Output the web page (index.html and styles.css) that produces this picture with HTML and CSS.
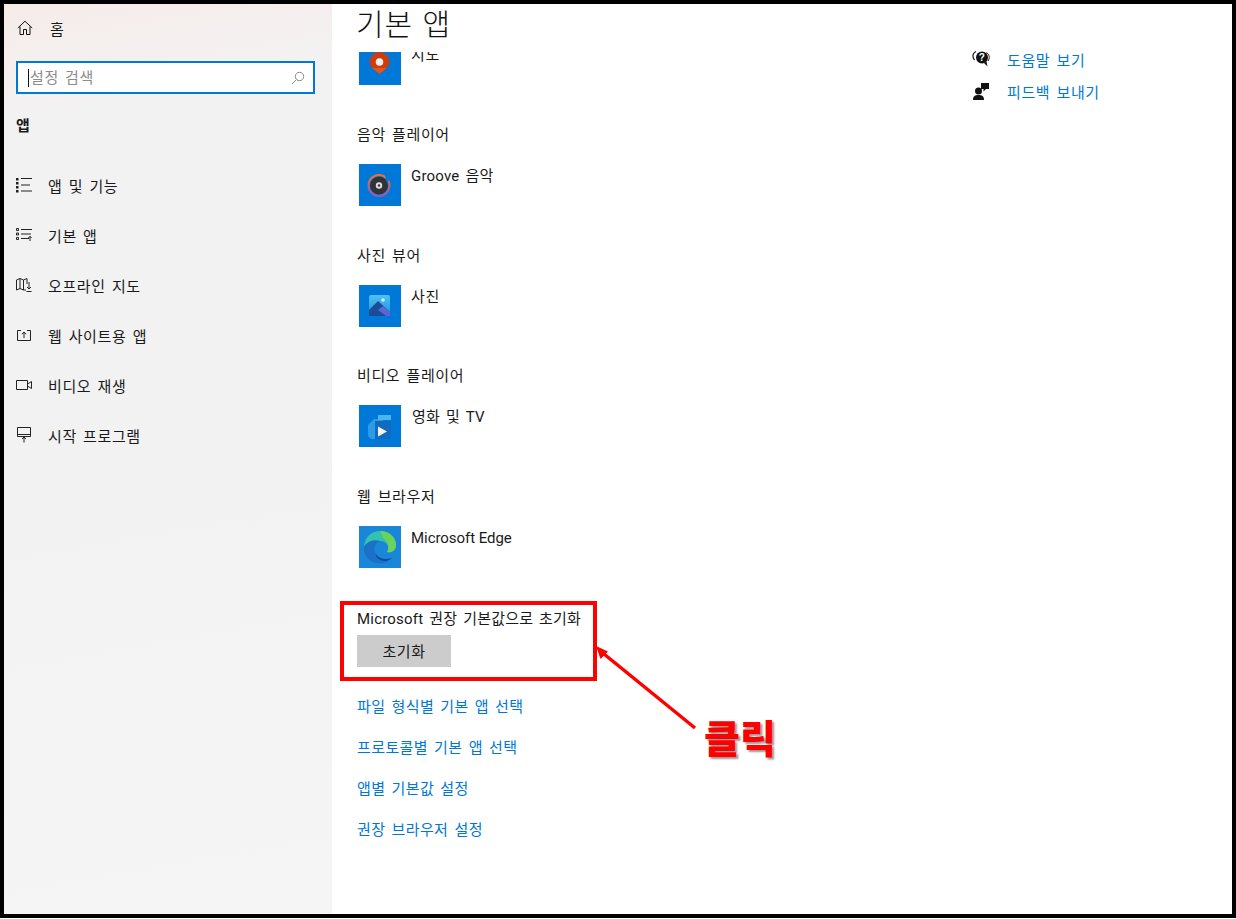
FILE: index.html
```html
<!DOCTYPE html>
<html lang="ko">
<head>
<meta charset="utf-8">
<title>기본 앱</title>
<link rel="stylesheet" href="styles.css">
</head>
<body>
<div class="frame">
  <aside class="sidebar">
    <div class="home">
      <svg class="ico" viewBox="0 0 16 16"><path d="M.8 8 8 1.2 15.2 8M3 6.5V14.5H6.5V9.5H9.5V14.5H13V6.5" fill="none" stroke="#111" stroke-width="1"/></svg>
      <span>홈</span>
    </div>
    <div class="search">
      <span class="caret"></span><span class="placeholder">설정 검색</span>
      <svg class="glass" viewBox="0 0 14 14"><circle cx="8.5" cy="5.5" r="4.2" fill="none" stroke="#8a8a8a"/><path d="M5.5 8.5 1 13" stroke="#8a8a8a" fill="none"/></svg>
    </div>
    <div class="group">앱</div>
    <nav class="nav">
      <div class="nav-item">
        <svg class="ico" viewBox="0 0 16 16"><path d="M0 1h2.500v2.500H0zM0 5h2.500v2.500H0zM0 9h2.500v2.500H0zM0 13h2.500v2.500H0z" fill="#222"/><path d="M5 1.500h11M5 8h9M5 14h11" stroke="#222" fill="none"/></svg>
        <span>앱 및 기능</span>
      </div>
      <div class="nav-item">
        <svg class="ico" viewBox="0 0 16 16"><path d="M0.5 1.500h2v2h-2zM0.5 6h2v2h-2zM0.5 10.500h2v2h-2z" fill="none" stroke="#222"/><path d="M5 2.500h11M5 7h10M5 11.500h8M14 14V9.500M12.300 11 14 9.300 15.700 11" stroke="#222" fill="none"/></svg>
        <span>기본 앱</span>
      </div>
      <div class="nav-item">
        <svg class="ico" viewBox="0 0 16 16"><path d="M.5 3 4 1.500 7.500 3 11 1.500V7M.5 3v10L4 11.500 7.500 13H10M4 1.500v10M7.500 3v10M13 5v7M11 10l2 2 2-2M10.500 14.500h5" stroke="#222" fill="none"/></svg>
        <span>오프라인 지도</span>
      </div>
      <div class="nav-item">
        <svg class="ico" viewBox="0 0 16 16"><path d="M5 3.500H1.500v10h13v-10H11M8 11V5M5.800 7.200 8 5l2.200 2.200" stroke="#222" fill="none"/></svg>
        <span>웹 사이트용 앱</span>
      </div>
      <div class="nav-item">
        <svg class="ico" viewBox="0 0 16 16"><path d="M.5 3.500h11v9H.5zM11.500 7l4-2.500v7l-4-2.500" stroke="#222" fill="none"/></svg>
        <span>비디오 재생</span>
      </div>
      <div class="nav-item">
        <svg class="ico" viewBox="0 0 16 16"><path d="M1.500.5h13v9h-13zM1 7.500h14M8 15.500V10M6 12l2-2 2 2" stroke="#222" fill="none"/></svg>
        <span>시작 프로그램</span>
      </div>
    </nav>
  </aside>

  <main class="main">
    <h1 class="title">기본 앱</h1>
    <div class="body">
      <div class="content">
        <section class="clipped">
          <div class="app">
            <div class="tile">
              <svg viewBox="0 0 42 42"><path d="M10.500 19a10 10 0 0 1 20 0c0 5-6 8-10 12-4-4-10-7-10-12Z" fill="#cf3c0c"/><path d="M13 25h15l-7.500 6Z" fill="#e2561a"/><circle cx="20.500" cy="19" r="3.800" fill="#eee"/></svg>
            </div>
            <span class="app-name">지도</span>
          </div>
        </section>
        <section class="cat">
          <div class="cat-label">음악 플레이어</div>
          <div class="app">
            <div class="tile">
              <svg viewBox="0 0 42 42"><defs><linearGradient id="ring" x1="0" y1="0" x2="0" y2="1"><stop offset="0" stop-color="#e8743a"/><stop offset="1" stop-color="#8a5ac8"/></linearGradient></defs><circle cx="20" cy="21.500" r="10.500" fill="none" stroke="url(#ring)" stroke-width="2"/><circle cx="20" cy="21.500" r="9" fill="#333336"/><circle cx="20" cy="21.500" r="3.200" fill="#ddd"/><circle cx="20" cy="21.500" r="1.200" fill="#333"/><path d="M26 11 32 13 28 19Z" fill="#0078d7"/></svg>
            </div>
            <span class="app-name mixed">Groove 음악</span>
          </div>
        </section>
        <section class="cat">
          <div class="cat-label">사진 뷰어</div>
          <div class="app">
            <div class="tile">
              <svg viewBox="0 0 42 42"><defs><linearGradient id="sky" x1="0" y1="0" x2="0" y2="1"><stop offset="0" stop-color="#4cc2f5"/><stop offset="1" stop-color="#1f8fe0"/></linearGradient></defs><rect x="10" y="10" width="21" height="21" rx="2" fill="url(#sky)"/><circle cx="24" cy="15" r="1.800" fill="#cfeefc"/><path d="M10 31V25L19 16 31 27V31Z" fill="#1d4c96"/><path d="M24 21 31 27V31H27L19 25Z" fill="#5a66d6"/></svg>
            </div>
            <span class="app-name">사진</span>
          </div>
        </section>
        <section class="cat">
          <div class="cat-label">비디오 플레이어</div>
          <div class="app">
            <div class="tile">
              <svg viewBox="0 0 42 42"><path d="M9 20 15 14H24V34H12L9 31Z" fill="#2c9be8"/><path d="M19 10H32V15H19Z" fill="#4cb4ee"/><rect x="16" y="16" width="16" height="18" fill="#1269bd"/><path d="M19 21.500 28 26.500 19 31.500Z" fill="#f2f6fa"/></svg>
            </div>
            <span class="app-name app-name-wide mixed">영화 및 TV</span>
          </div>
        </section>
        <section class="cat">
          <div class="cat-label">웹 브라우저</div>
          <div class="app">
            <div class="tile tile-edge">
              <svg viewBox="0 0 42 42"><path d="M5 21C6 10 13 5 21 5 31 5 37 12 37 19 37 25 32 27 28 26 31 22 29 15 21 15 13 15 8 17 5 21Z" fill="#35c1b0"/><path d="M21 5C31 5 37 12 37 19 37 25 32 27 28 26 31 22 29 15 24 12 23 9 22 7 21 5Z" fill="#6bd35c"/><path d="M5 21C8 15 15 13 21 15 15 17 14 24 17 29 20 34 27 35 33 32 28 37 22 38 17 37 9 35 4 28 5 21Z" fill="#1b70c8"/><path d="M16 24C16 30 22 35 33 32 27 37 20 35 17 30Z" fill="#0c4a97"/></svg>
            </div>
            <span class="app-name latin">Microsoft Edge</span>
          </div>
        </section>
        <section class="reset">
          <div class="reset-label">Microsoft 권장 기본값으로 초기화</div>
          <div class="button">초기화</div>
        </section>
        <div class="links">
          <a class="link">파일 형식별 기본 앱 선택</a>
          <a class="link">프로토콜별 기본 앱 선택</a>
          <a class="link">앱별 기본값 설정</a>
          <a class="link">권장 브라우저 설정</a>
        </div>
      </div>
      <div class="aside">
        <div class="help">
          <svg class="help-ico" viewBox="0 0 18 18"><path d="M4 1.500C.5 3 0 7 2.500 10" fill="none" stroke="#111" stroke-width="1.200"/><path d="M14.500 2.500C17.500 4.500 18 8 16 11" fill="none" stroke="#111" stroke-width="1"/><circle cx="10" cy="7.500" r="6" fill="#111"/><path d="M12 13l3.500 3.500-1-5z" fill="#111"/><text x="10" y="11" class="help-q">?</text></svg>
          <a class="link-side">도움말 보기</a>
        </div>
        <div class="help">
          <svg class="help-ico" viewBox="0 0 18 18"><circle cx="6.500" cy="9" r="3.500" fill="#111"/><path d="M1 18c0-4 2-5 5.500-5s5.500 1 5.500 5z" fill="#111"/><path d="M9 1h8v6h-3l-2.500 2.500V7H9z" fill="#111"/></svg>
          <a class="link-side">피드백 보내기</a>
        </div>
      </div>
    </div>
  </main>

  <div class="annot-box"></div>
  <svg class="annot-arrow" viewBox="0 0 110 90"><path d="M104 88 13 14" stroke="#f00" stroke-width="3.500" fill="none"/><path d="M6 7 16.300 11.700 9.700 18.300Z" fill="#f00" stroke="#f00"/></svg>
  <div class="annot-text">클릭</div>
</div>
</body>
</html>
```
FILE: styles.css
```css
* { box-sizing: border-box; }
html, body { margin: 0; padding: 0; background: #fff; }
body {
  width: 1236px;
  height: 919px;
  overflow: hidden;
  font-family: Roboto, "Noto Sans CJK KR", sans-serif;
  color: #1a1a1a;
  font-size: 15px;
  letter-spacing: 0.6px;
  word-spacing: 2px;
}
.frame {
  position: relative;
  width: 1236px;
  height: 918px;
  border: 4px solid #000;
  display: flex;
  overflow: hidden;
}
.sidebar {
  width: 328px;
  flex: none;
  padding: 0 12px;
  background: linear-gradient(170deg, #f6ecea 0%, #f3f2f2 12%, #f2f2f2 45%, #f5f5f5 100%);
}
.ico { width: 16px; height: 16px; flex: none; }
.home {
  height: 24px;
  margin-top: 12px;
  display: flex;
  align-items: center;
  gap: 17px;
  padding-left: 1px;
}
.search {
  margin-top: 21px;
  width: 299px;
  height: 33px;
  border: 2px solid #0078d7;
  background: #fff;
  display: flex;
  align-items: center;
  padding: 0 8px 0 10px;
}
.caret { width: 1px; height: 18px; background: #111; flex: none; }
.placeholder { color: #8c8c8c; flex: 1; padding-left: 1px; padding-bottom: 2px; }
.glass { width: 14px; height: 14px; flex: none; }
.group { margin-top: 21px; height: 22px; font-weight: 700; line-height: 22px; }
.nav { margin-top: 23px; display: flex; flex-direction: column; }
.nav-item {
  height: 50px;
  display: flex;
  align-items: center;
  gap: 16px;
}
.main { flex: 1; min-width: 0; padding-left: 25px; display: flex; flex-direction: column; height: 100%; }
.title {
  margin: 0 0 0 -1px;
  height: 48px;
  font-size: 30px;
  font-weight: 300;
  line-height: 41px;
  letter-spacing: 1px;
  word-spacing: 1px;
  color: #111;
}
.body { flex: 1; min-height: 0; display: flex; }
.content { width: 615px; flex: none; overflow: hidden; }
.clipped { margin-top: -9px; height: 58px; }
.clipped + .cat { margin-top: 22px; }
.cat { height: 120.7px; }
.cat-label { height: 22px; line-height: 24px; margin-bottom: 19px; }
.app { display: flex; align-items: flex-start; padding-left: 2px; }
.tile { width: 42px; height: 42px; background: #0078d7; flex: none; }
.tile svg { display: block; width: 42px; height: 42px; }
.tile-edge { background: #1a86d8; }
.app-name { margin-left: 10px; line-height: 24px; }
.app-name-wide { margin-left: 11px; }
.mixed { letter-spacing: 0.2px; }
.latin { letter-spacing: -0.05px; word-spacing: 0; }
.reset { margin-top: 1.2px; }
.reset-label { height: 22px; line-height: 24px; letter-spacing: 0.2px; }
.button {
  margin-top: 6px;
  width: 94px;
  height: 32px;
  background: #ccc;
  text-align: center;
  line-height: 34px;
}
.links { margin-top: 28px; display: flex; flex-direction: column; }
.link { height: 41px; line-height: 24px; color: #0078d4; letter-spacing: 0.4px; }
.aside { flex: 1; margin-top: -9px; }
.help { display: flex; align-items: center; height: 32px; gap: 17px; }
.help-ico { width: 18px; height: 18px; flex: none; }
.help-q { font-size: 10px; font-weight: 700; fill: #fff; text-anchor: middle; font-family: "Liberation Sans", sans-serif; }
.link-side { color: #0078d4; }
.annot-box {
  position: absolute;
  left: 336px;
  top: 597px;
  width: 257px;
  height: 80px;
  border: 4px solid #f00;
}
.annot-arrow {
  position: absolute;
  left: 587px;
  top: 636px;
  width: 110px;
  height: 90px;
}
.annot-text {
  position: absolute;
  left: 700px;
  top: 711px;
  font-size: 39px;
  line-height: 50px;
  font-weight: 900;
  letter-spacing: 0;
  color: #f00;
  text-shadow: 2px 2px 2px #999;
}
```
